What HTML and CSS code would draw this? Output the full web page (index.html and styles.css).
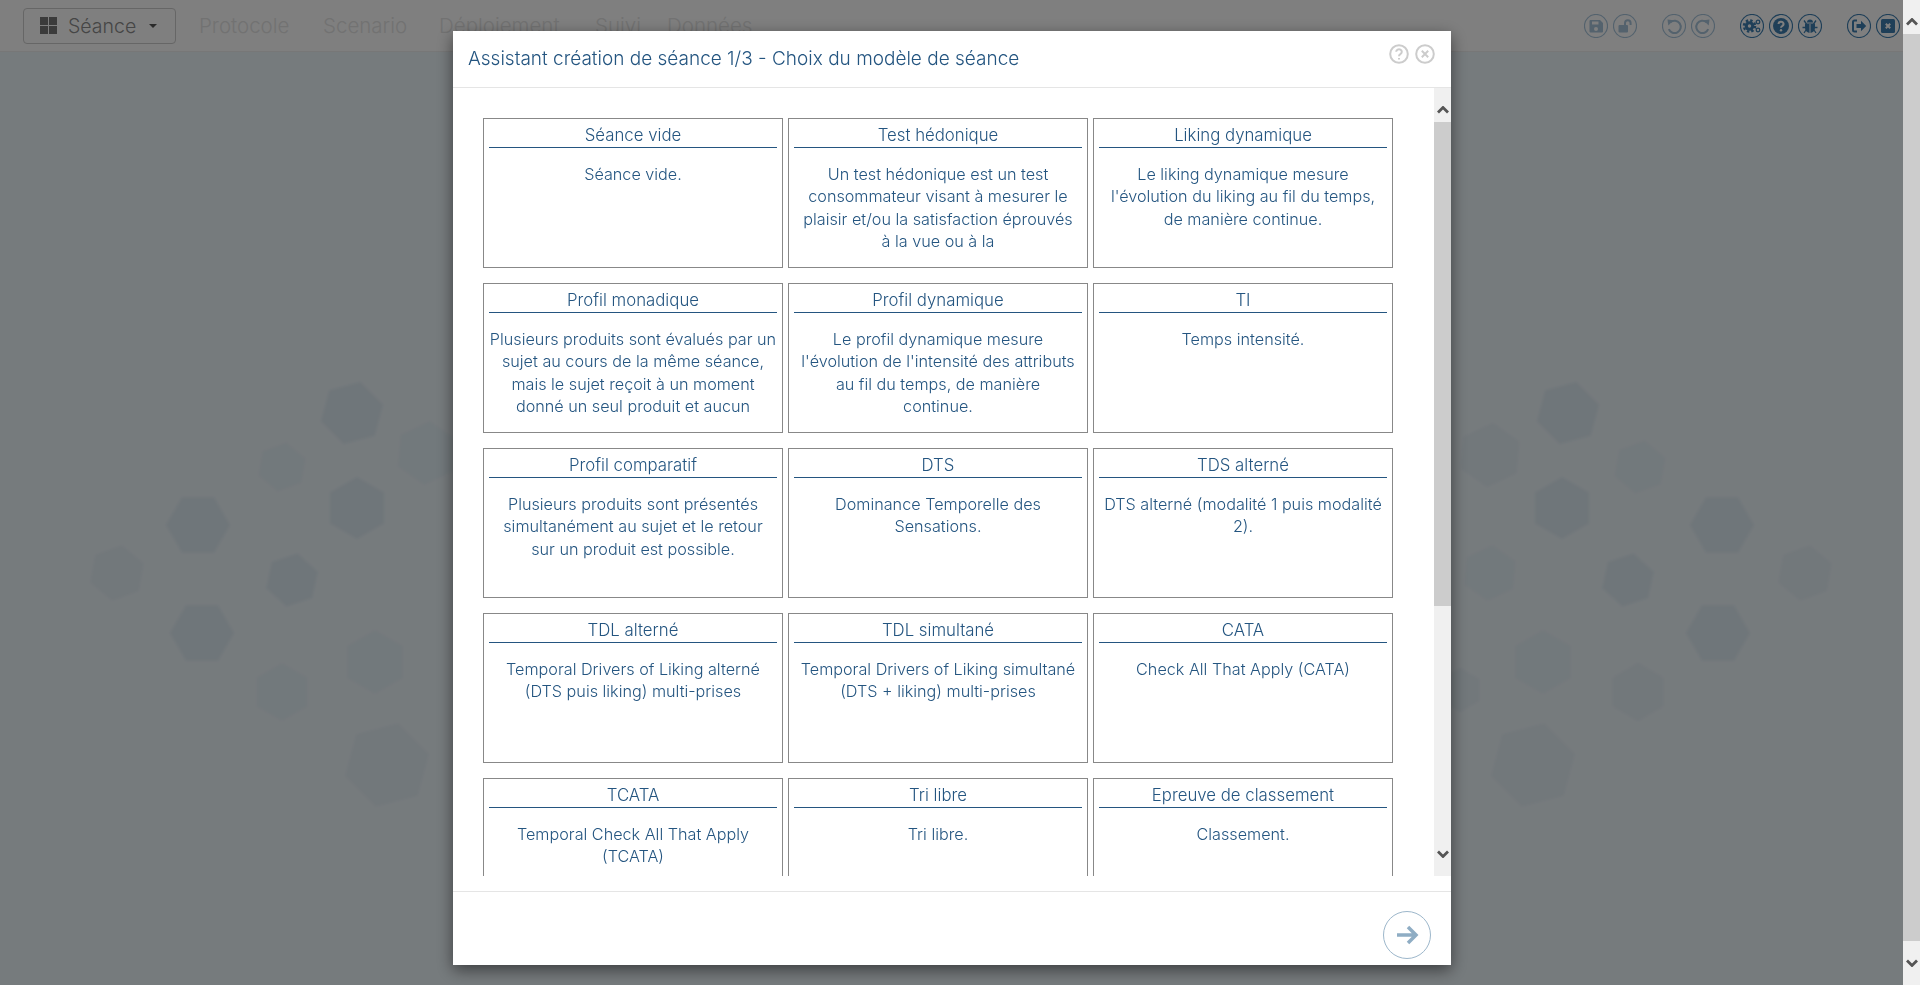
FILE: index.html
```html
<!DOCTYPE html>
<html lang="fr">
<head>
    <meta charset="UTF-8">
    <meta name="viewport" content="width=device-width, initial-scale=1.0">
    <title>Assistant création de séance</title>
    <link rel="stylesheet" href="styles.css">
</head>
<body>
    <div class="page">
        <div class="main">
            <div class="navbar">
                <button class="menu-btn">
                    <span class="menu-grid"><i></i><i></i><i></i><i></i></span>
                    <span class="menu-label">Séance</span>
                    <span class="caret"></span>
                </button>
                <nav class="nav-links">
                    <a href="#">Protocole</a>
                    <a href="#">Scenario</a>
                    <a href="#">Déploiement</a>
                    <a href="#">Suivi</a>
                    <a href="#">Données</a>
                </nav>
                <div class="tools">
                    <div class="tool-group off">
                        <svg class="tool" viewBox="0 0 24 24"><circle class="ring" cx="12" cy="12" r="11.5"/><path class="solid" fill-rule="evenodd" d="M6.5 6h9.5l3 3v8.5a1 1 0 0 1-1 1H6.500a1 1 0 0 1-1-1V7a1 1 0 0 1 1-1zM8 7.500v3h6.500v-3zM12 13a2 2 0 1 0 0 4 2 2 0 0 0 0-4z"/></svg>
                        <svg class="tool" viewBox="0 0 24 24"><circle class="ring" cx="12" cy="12" r="11.5"/><rect class="solid" x="5.500" y="11" width="9.500" height="7.500" rx="1"/><path class="line" d="M12 11V9a2.800 2.800 0 0 1 5.600 0v2"/></svg>
                    </div>
                    <div class="tool-group off">
                        <svg class="tool" viewBox="0 0 24 24"><circle class="ring" cx="12" cy="12" r="11.5"/><path class="line" d="M8.500 8.200a6.200 6.200 0 1 1-1.700 7"/><path class="solid" d="M5.500 5.500l6 .8-5.200 5.200z"/></svg>
                        <svg class="tool" viewBox="0 0 24 24"><circle class="ring" cx="12" cy="12" r="11.500"/><path class="line" d="M15.500 8.200a6.200 6.200 0 1 0 1.700 7"/><path class="solid" d="M18.500 5.500l-6 .8 5.200 5.200z"/></svg>
                    </div>
                    <div class="tool-group">
                        <svg class="tool" viewBox="0 0 24 24"><circle class="ring" cx="12" cy="12" r="11.5"/><circle class="teeth" cx="9.500" cy="12" r="5.600"/><circle class="solid" cx="9.500" cy="12" r="4.800"/><circle class="dot" cx="9.500" cy="12" r="1.700"/><circle class="thin" cx="18" cy="8" r="1.800"/><circle class="thin" cx="18" cy="16" r="1.800"/></svg>
                        <svg class="tool" viewBox="0 0 24 24"><circle class="ring" cx="12" cy="12" r="11.5"/><circle class="solid" cx="12" cy="12" r="8"/><path class="cut" d="M9.500 10a2.500 2.300 0 1 1 3.700 2c-.9.500-1.200.9-1.200 1.800"/><circle class="dot" cx="12" cy="16.200" r="1.200"/></svg>
                        <svg class="tool" viewBox="0 0 24 24"><circle class="ring" cx="12" cy="12" r="11.5"/><path class="solid" d="M9 8.500a3 3 0 0 1 6 0zM8 9.500h8c.6 0 1 .4 1 1V14a5 5 0 0 1-10 0v-3.500c0-.6.400-1 1-1z"/><path class="thin" d="M6 6.500l2.500 3.500M18 6.500l-2.500 3.500M4.500 13.500h3M19.500 13.500h-3M6 19l2-3M18 19l-2-3"/><path class="cut-thin" d="M12 10v9"/></svg>
                    </div>
                    <div class="tool-group">
                        <svg class="tool" viewBox="0 0 24 24"><circle class="ring" cx="12" cy="12" r="11.5"/><path class="line" d="M10 6.500H7.500a1.500 1.500 0 0 0-1.500 1.500v8a1.500 1.500 0 0 0 1.500 1.500H10"/><path class="solid" d="M9.500 10H14V6.800l5.200 5.200-5.200 5.200V14H9.500z"/></svg>
                        <svg class="tool" viewBox="0 0 24 24"><circle class="ring" cx="12" cy="12" r="11.5"/><rect class="solid" x="5" y="5" width="14" height="14" rx="1.500"/><path class="cut" d="M9.800 9.800l4.400 4.400M14.200 9.800l-4.400 4.400"/></svg>
                    </div>
                </div>
            </div>

            <div class="backdrop">
                <svg class="hexes" viewBox="0 0 1903 933">
                    <defs>
                        <filter id="soft"><feGaussianBlur stdDeviation="1.2"/></filter>
                        <polygon id="hex" points="0,-1 .87,-.5 .87,.5 0,1 -.87,.5 -.87,-.5"/>
                    </defs>
                    <g class="hex-set" filter="url(#soft)">
                        <use href="#hex" class="h3" transform="translate(352 361) rotate(15) scale(32)"/>
                        <use href="#hex" class="h1" transform="translate(427 401) rotate(5) scale(32)"/>
                        <use href="#hex" class="h1" transform="translate(282 415) rotate(10) scale(25)"/>
                        <use href="#hex" class="h3" transform="translate(357 456) scale(31)"/>
                        <use href="#hex" class="h3" transform="translate(198 473) rotate(30) scale(32)"/>
                        <use href="#hex" class="h2" transform="translate(117 521) rotate(10) scale(28)"/>
                        <use href="#hex" class="h3" transform="translate(292 528) rotate(12) scale(27)"/>
                        <use href="#hex" class="h3" transform="translate(202 581) rotate(30) scale(32)"/>
                        <use href="#hex" class="h1" transform="translate(375 610) scale(32)"/>
                        <use href="#hex" class="h1" transform="translate(282 640) scale(29)"/>
                        <use href="#hex" class="h2" transform="translate(387 713) rotate(15) scale(43)"/>
                        <use href="#hex" class="h3" transform="translate(1568 361) rotate(15) scale(32)"/>
                        <use href="#hex" class="h2" transform="translate(1490 403) rotate(5) scale(32)"/>
                        <use href="#hex" class="h1" transform="translate(1640 415) rotate(10) scale(27)"/>
                        <use href="#hex" class="h3" transform="translate(1562 456) scale(31)"/>
                        <use href="#hex" class="h3" transform="translate(1722 473) rotate(30) scale(32)"/>
                        <use href="#hex" class="h2" transform="translate(1805 521) rotate(10) scale(28)"/>
                        <use href="#hex" class="h3" transform="translate(1628 528) rotate(12) scale(27)"/>
                        <use href="#hex" class="h1" transform="translate(1490 521) rotate(5) scale(28)"/>
                        <use href="#hex" class="h3" transform="translate(1718 581) rotate(30) scale(32)"/>
                        <use href="#hex" class="h1" transform="translate(1543 610) scale(32)"/>
                        <use href="#hex" class="h2" transform="translate(1638 640) scale(29)"/>
                        <use href="#hex" class="h2" transform="translate(1533 713) rotate(15) scale(43)"/>
                        <use href="#hex" class="h2" transform="translate(1460 638) scale(22)"/>
                    </g>
                </svg>
            </div>

            <div class="overlay"></div>

            <div class="modal">
                <div class="modal-header">
                    <h4>Assistant création de séance 1/3 - Choix du modèle de séance</h4>
                    <div class="modal-actions">
                        <svg class="mini" viewBox="0 0 20 20"><circle cx="10" cy="10" r="8.800"/><path d="M7.200 7.800a2.800 2.600 0 1 1 4.200 2.300c-1 .6-1.400 1-1.400 2.100"/><path d="M10 14v1.500"/></svg>
                        <svg class="mini" viewBox="0 0 20 20"><circle cx="10" cy="10" r="8.800"/><path d="M6.800 6.800l6.400 6.400M13.200 6.800l-6.400 6.400"/></svg>
                    </div>
                </div>
                <div class="modal-body">
                    <div class="model-list">
                        <div class="grid">
                            <div class="card"><div class="card-title">Séance vide</div><p>Séance vide.</p></div>
                            <div class="card"><div class="card-title">Test hédonique</div><p>Un test hédonique est un test<br>consommateur visant à mesurer le<br>plaisir et/ou la satisfaction éprouvés<br>à la vue ou à la</p></div>
                            <div class="card"><div class="card-title">Liking dynamique</div><p>Le liking dynamique mesure<br>l'évolution du liking au fil du temps,<br>de manière continue.</p></div>
                            <div class="card"><div class="card-title">Profil monadique</div><p>Plusieurs produits sont évalués par un<br>sujet au cours de la même séance,<br>mais le sujet reçoit à un moment<br>donné un seul produit et aucun</p></div>
                            <div class="card"><div class="card-title">Profil dynamique</div><p>Le profil dynamique mesure<br>l'évolution de l'intensité des attributs<br>au fil du temps, de manière<br>continue.</p></div>
                            <div class="card"><div class="card-title">TI</div><p>Temps intensité.</p></div>
                            <div class="card"><div class="card-title">Profil comparatif</div><p>Plusieurs produits sont présentés<br>simultanément au sujet et le retour<br>sur un produit est possible.</p></div>
                            <div class="card"><div class="card-title">DTS</div><p>Dominance Temporelle des<br>Sensations.</p></div>
                            <div class="card"><div class="card-title">TDS alterné</div><p>DTS alterné (modalité 1 puis modalité<br>2).</p></div>
                            <div class="card"><div class="card-title">TDL alterné</div><p>Temporal Drivers of Liking alterné<br>(DTS puis liking) multi-prises</p></div>
                            <div class="card"><div class="card-title">TDL simultané</div><p>Temporal Drivers of Liking simultané<br>(DTS + liking) multi-prises</p></div>
                            <div class="card"><div class="card-title">CATA</div><p>Check All That Apply (CATA)</p></div>
                            <div class="card"><div class="card-title">TCATA</div><p>Temporal Check All That Apply<br>(TCATA)</p></div>
                            <div class="card"><div class="card-title">Tri libre</div><p>Tri libre.</p></div>
                            <div class="card"><div class="card-title">Epreuve de classement</div><p>Classement.</p></div>
                        </div>
                    </div>
                    <div class="scrollbar inner">
                        <svg class="chevron" viewBox="0 0 12 8"><path d="M1 6.500l5-5 5 5"/></svg>
                        <div class="track"><div class="thumb"></div></div>
                        <svg class="chevron" viewBox="0 0 12 8"><path d="M1 1.500l5 5 5-5"/></svg>
                    </div>
                </div>
                <div class="modal-footer">
                    <button class="next-btn">
                        <svg viewBox="0 0 24 24"><path d="M2 12h19M13 4l8 8-8 8"/></svg>
                    </button>
                </div>
            </div>
        </div>

        <div class="scrollbar outer">
            <svg class="chevron" viewBox="0 0 12 8"><path d="M1 6.500l5-5 5 5"/></svg>
            <div class="track"><div class="thumb"></div></div>
            <svg class="chevron" viewBox="0 0 12 8"><path d="M1 1.500l5 5 5-5"/></svg>
        </div>
    </div>
</body>
</html>
```

FILE: styles.css
```css
* {
    box-sizing: border-box;
}

body {
    margin: 0;
    font-family: 'Inter', 'Liberation Sans', sans-serif;
    font-weight: 300;
    color: #245580;
    overflow: hidden;
}

.page {
    display: flex;
    width: 1920px;
    height: 985px;
}

.main {
    position: relative;
    flex: 1;
    display: flex;
    flex-direction: column;
    overflow: hidden;
}

/* barre du haut */
.navbar {
    display: flex;
    align-items: center;
    height: 52px;
    padding-left: 23px;
    background-color: white;
    border-bottom: 1px solid #eee;
}

.menu-btn {
    display: flex;
    align-items: center;
    width: 153px;
    height: 36px;
    padding: 0 0 0 16px;
    background: white;
    border: 1px solid #ccc;
    border-radius: 4px;
    font: inherit;
    font-size: 19.5px;
    color: #8c8c8c;
}

.menu-grid {
    display: grid;
    grid-template-columns: 8px 8px;
    grid-auto-rows: 8px;
    gap: 1px;
    margin-right: 11px;
}

.menu-grid i {
    background-color: #777;
}

.caret {
    margin-left: 13px;
    border-top: 4px solid #555;
    border-left: 4px solid transparent;
    border-right: 4px solid transparent;
}

.nav-links {
    display: flex;
    margin-left: 23px;
}

.nav-links a {
    font-size: 20.5px;
    color: #e4e4e4;
    text-decoration: none;
}

.nav-links a:nth-child(1) { width: 124px; }
.nav-links a:nth-child(2) { width: 116px; }
.nav-links a:nth-child(3) { width: 156px; }
.nav-links a:nth-child(4) { width: 72px; }

.tools {
    display: flex;
    gap: 25px;
    margin-left: auto;
    padding-right: 3px;
}

.tool-group {
    display: flex;
    gap: 5px;
}

.tool-group.off {
    opacity: 0.45;
}

.tool {
    width: 24px;
    height: 24px;
}

.ring {
    fill: none;
    stroke: #3f7fb1;
    stroke-width: 1.2;
}

.solid {
    fill: #3f7fb1;
}

.line {
    fill: none;
    stroke: #3f7fb1;
    stroke-width: 2;
}

.thin {
    fill: none;
    stroke: #3f7fb1;
    stroke-width: 1.3;
}

.teeth {
    fill: none;
    stroke: #3f7fb1;
    stroke-width: 2.4;
    stroke-dasharray: 2.400 2;
}

.cut {
    fill: none;
    stroke: white;
    stroke-width: 2;
}

.cut-thin {
    fill: none;
    stroke: white;
    stroke-width: 1;
}

.dot {
    fill: white;
}

/* fond */
.backdrop {
    flex: 1;
    position: relative;
    background-color: #edf6fb;
}

.hexes {
    position: absolute;
    top: 0;
    left: 0;
    width: 1903px;
    height: 933px;
}

.hex-set .h1 { fill: #4f8aa0; opacity: 0.03; }
.hex-set .h2 { fill: #4f8aa0; opacity: 0.05; }
.hex-set .h3 { fill: #4f8aa0; opacity: 0.08; }

.overlay {
    position: absolute;
    top: 0;
    left: 0;
    width: 100%;
    height: 100%;
    background-color: rgba(0,0,0,.5);
}

/* fenetre */
.modal {
    position: absolute;
    top: 31px;
    left: 453px;
    width: 998px;
    height: 934px;
    display: flex;
    flex-direction: column;
    background-color: white;
    box-shadow: 0 5px 15px rgba(0,0,0,.5);
}

.modal-header {
    display: flex;
    justify-content: space-between;
    height: 57px;
    padding: 0 16px 0 15px;
    border-bottom: 1px solid #e5e5e5;
}

.modal-header h4 {
    margin: 0;
    font-size: 19px;
    font-weight: 300;
    line-height: 56px;
}

.modal-actions {
    display: flex;
    gap: 6px;
    padding-top: 13px;
}

.mini {
    width: 20px;
    height: 20px;
    fill: none;
    stroke: #ccc;
    stroke-width: 2;
}

.modal-body {
    display: flex;
    flex: none;
    height: 788px;
    margin-bottom: 15px;
    overflow: hidden;
}

.model-list {
    flex: 1;
    padding: 30px 0 0 30px;
    overflow: hidden;
}

.grid {
    display: grid;
    grid-template-columns: repeat(3, 300px);
    grid-auto-rows: 150px;
    gap: 15px 5px;
}

.card {
    padding: 0 5px;
    border: 1px solid #888;
    text-align: center;
}

.card-title {
    height: 29px;
    font-size: 16.8px;
    line-height: 33px;
    border-bottom: 1px solid #245580;
}

.card p {
    margin: 15px 0 0;
    font-size: 16.2px;
    line-height: 22.4px;
    white-space: nowrap;
}

.modal-footer {
    display: flex;
    justify-content: flex-end;
    flex: 1;
    padding: 19px 20px 0 0;
    border-top: 1px solid #e5e5e5;
}

.next-btn {
    width: 48px;
    height: 48px;
    padding: 11px;
    background: white;
    border: 1px solid #9db7cb;
    border-radius: 50%;
}

.next-btn svg {
    display: block;
    fill: none;
    stroke: #8fadc4;
    stroke-width: 3.5;
}

/* barres de defilement */
.scrollbar {
    display: flex;
    flex-direction: column;
    align-items: center;
    width: 17px;
    background-color: #f0f0f0;
}

.chevron {
    flex: none;
    width: 12px;
    height: 8px;
    fill: none;
    stroke: #555;
    stroke-width: 2.8;
}

.track {
    flex: 1;
    width: 100%;
}

.thumb {
    background-color: #ccc;
}

.inner .chevron:first-child { margin-top: 18px; }
.inner .chevron:last-child { margin-bottom: 18px; }
.inner .track { padding-top: 8px; }
.inner .thumb { height: 484px; }

.outer .chevron:first-child { margin-top: 18px; }
.outer .chevron:last-child { margin-bottom: 18px; }
.outer .track { padding-top: 8px; }
.outer .thumb { height: 907px; }
```
